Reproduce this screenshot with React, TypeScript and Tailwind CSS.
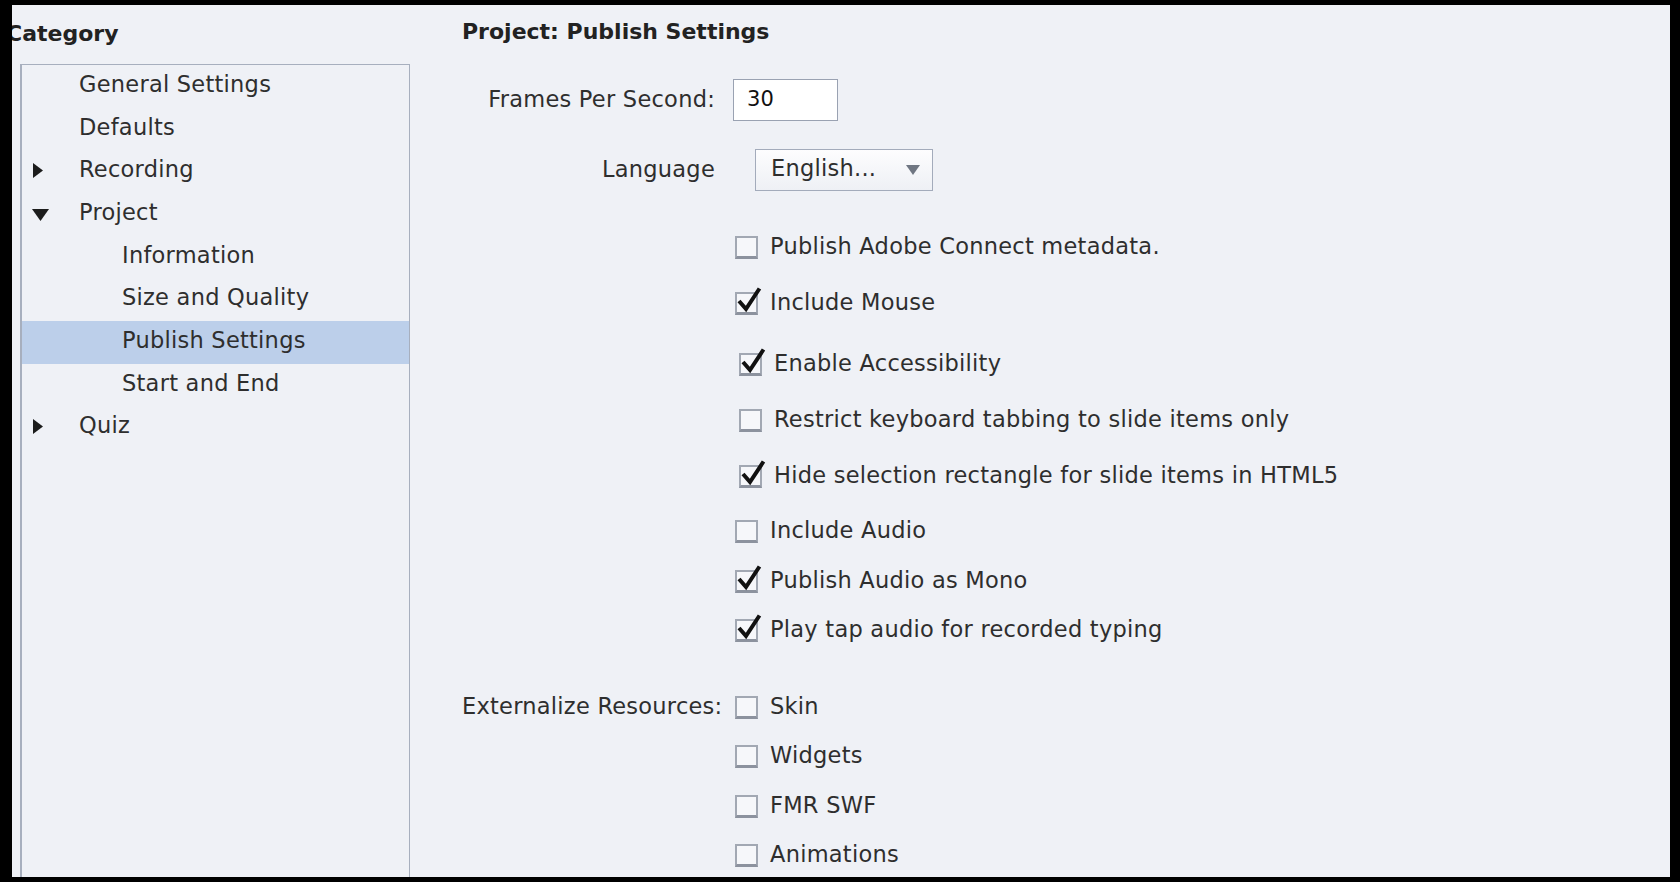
import React from 'react';

type TreeItem = {
  label: string;
  level: 1 | 2;
  arrow?: 'right' | 'down';
  selected?: boolean;
};

const tree: TreeItem[] = [
  { label: 'General Settings', level: 1 },
  { label: 'Defaults', level: 1 },
  { label: 'Recording', level: 1, arrow: 'right' },
  { label: 'Project', level: 1, arrow: 'down' },
  { label: 'Information', level: 2 },
  { label: 'Size and Quality', level: 2 },
  { label: 'Publish Settings', level: 2, selected: true },
  { label: 'Start and End', level: 2 },
  { label: 'Quiz', level: 1, arrow: 'right' },
];

type Option = {
  label: string;
  checked: boolean;
  gap: string;
  indent?: boolean;
};

const options: Option[] = [
  { label: 'Publish Adobe Connect metadata.', checked: false, gap: 'mt-[43px]' },
  { label: 'Include Mouse', checked: true, gap: 'mt-[30px]' },
  { label: 'Enable Accessibility', checked: true, gap: 'mt-[35px]', indent: true },
  { label: 'Restrict keyboard tabbing to slide items only', checked: false, gap: 'mt-[30px]', indent: true },
  { label: 'Hide selection rectangle for slide items in HTML5', checked: true, gap: 'mt-[30px]', indent: true },
  { label: 'Include Audio', checked: false, gap: 'mt-[29px]' },
  { label: 'Publish Audio as Mono', checked: true, gap: 'mt-[24px]' },
  { label: 'Play tap audio for recorded typing', checked: true, gap: 'mt-[23px]' },
];

const resources: Option[] = [
  { label: 'Skin', checked: false, gap: 'mt-[51px]' },
  { label: 'Widgets', checked: false, gap: 'mt-[23px]' },
  { label: 'FMR SWF', checked: false, gap: 'mt-[24px]' },
  { label: 'Animations', checked: false, gap: 'mt-[23px]' },
];

function Arrow({ dir }: { dir: 'right' | 'down' }) {
  if (dir === 'right') {
    return (
      <svg width="10" height="15" viewBox="0 0 10 15" className="absolute left-[11px] top-1/2 -translate-y-[9px]">
        <path d="M0 0 L10 7.5 L0 15 Z" fill="#1c1c1c" />
      </svg>
    );
  }
  return (
    <svg width="17" height="12" viewBox="0 0 17 12" className="absolute left-[10px] top-1/2 -translate-y-[5px]">
      <path d="M0 0 L17 0 L8.5 12 Z" fill="#1c1c1c" />
    </svg>
  );
}

function CheckBox({ checked }: { checked: boolean }) {
  return (
    <div className="relative h-[23px] w-[23px] shrink-0 border-2 border-b-[3px] border-[#a2a8b3] border-b-[#8c929e] bg-[#f6f7fa]">
      {checked && (
        <svg width="26" height="26" viewBox="0 0 26 26" className="absolute -left-[1px] -top-[8px] overflow-visible">
          <path d="M3 15 L10 23 L23.5 2.5" fill="none" stroke="#111" strokeWidth="4" strokeLinejoin="miter" />
        </svg>
      )}
    </div>
  );
}

function OptionRow({ opt, label, wide }: { opt: Option; label?: string; wide?: boolean }) {
  const margin = opt.indent ? 'ml-[24px]' : wide ? 'ml-[17px]' : 'ml-[20px]';
  return (
    <div className={`${opt.gap} flex h-[26px] items-center`}>
      <div className={`${wide ? 'w-[256px]' : 'w-[253px]'} shrink-0 whitespace-nowrap text-right`}>{label}</div>
      <div className={`${margin} flex items-center gap-[12px]`}>
        <CheckBox checked={opt.checked} />
        <span className="whitespace-nowrap">{opt.label}</span>
      </div>
    </div>
  );
}

export default function App() {
  return (
    <div className="h-[882px] w-[1680px] overflow-hidden bg-black pb-[5px] pl-[12px] pr-[10px] pt-[5px]">
      <div className="flex h-full overflow-hidden bg-[#eff1f6] font-['DejaVu_Sans',sans-serif] text-[22.5px] tracking-[0.25px] text-[#2e2e2e]">
        <aside className="flex w-[398px] shrink-0 flex-col">
          <div className="-ml-[6px] flex h-[57px] items-center text-[22px] font-bold tracking-normal text-[#222]">
            Category
          </div>
          <div className="ml-[8px] mt-[2px] flex-1 border-l-2 border-r border-t border-[#a7afbe]">
            {tree.map((item) => (
              <div
                key={item.label}
                className={`relative flex h-[42.7px] items-center pb-[3px] ${item.selected ? 'bg-[#bccfea]' : ''} ${
                  item.level === 1 ? 'pl-[57px]' : 'pl-[100px]'
                }`}
              >
                {item.arrow && <Arrow dir={item.arrow} />}
                <span className="whitespace-nowrap">{item.label}</span>
              </div>
            ))}
          </div>
        </aside>

        <main className="flex flex-1 flex-col pl-[52px]">
          <div className="flex h-[52px] items-center text-[22px] font-bold tracking-normal text-[#222]">
            Project: Publish Settings
          </div>

          <div className="mt-[22px] flex h-[42px] items-center">
            <div className="w-[253px] shrink-0 text-right">Frames Per Second:</div>
            <div className="ml-[18px] flex h-[42px] w-[105px] items-center border border-[#9aa2b2] bg-white pl-[13px] text-[21px] text-[#111]">
              30
            </div>
          </div>

          <div className="mt-[28px] flex h-[42px] items-center">
            <div className="w-[253px] shrink-0 text-right">Language</div>
            <div className="ml-[40px] flex h-[42px] w-[178px] items-center justify-between border border-[#a3abbb] bg-gradient-to-b from-[#fdfdfe] to-[#eef0f5] pb-[3px] pl-[15px] pr-[12px]">
              <span>English...</span>
              <svg width="14" height="10" viewBox="0 0 14 10" className="mt-[3px]">
                <path d="M0 0 L14 0 L7 10 Z" fill="#6f7682" />
              </svg>
            </div>
          </div>

          {options.map((opt) => (
            <OptionRow key={opt.label} opt={opt} />
          ))}

          {resources.map((opt, i) => (
            <OptionRow key={opt.label} opt={opt} label={i === 0 ? 'Externalize Resources:' : undefined} wide />
          ))}
        </main>
      </div>
    </div>
  );
}
